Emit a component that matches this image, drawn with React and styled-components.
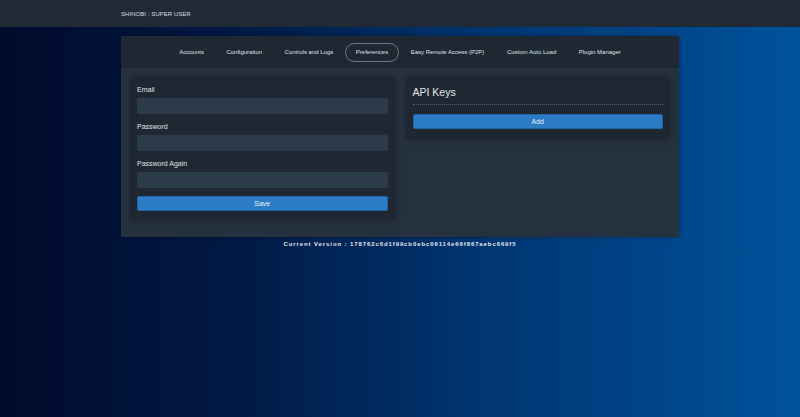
import React from 'react';
import styled, { createGlobalStyle } from 'styled-components';

const GlobalStyle = createGlobalStyle`
  html, body {
    margin: 0;
    padding: 0;
  }
  body {
    font-family: "Liberation Sans", Arial, sans-serif;
    background: #010a2b;
  }
  * {
    box-sizing: border-box;
  }
`;

const Page = styled.div`
  min-height: 100vh;
  background: linear-gradient(to right, #010a2b 0%, #011a45 30%, #003571 60%, #00529c 100%);
`;

const Header = styled.div`
  height: 27px;
  background: #202a35;
  display: flex;
  align-items: center;
`;

const HeaderInner = styled.div`
  width: 558px;
  margin: 0 auto;
  color: #d8dde3;
  font-size: 6px;
  letter-spacing: 0.05px;
`;

const Panel = styled.div`
  width: 558px;
  margin: 9px auto 0;
  background: #263140;
  border-radius: 2px;
  box-shadow: 0 0 4px rgba(0, 0, 0, 0.35);
  overflow: hidden;
`;

const Nav = styled.div`
  height: 32px;
  background: #1f2832;
  display: flex;
  justify-content: center;
  align-items: center;
`;

const NavItem = styled.div`
  height: 19px;
  padding: 0 10.25px;
  display: flex;
  align-items: center;
  border-radius: 10px;
  border: 1px solid ${(p) => (p.active ? '#6d7682' : 'transparent')};
  color: #dde2e8;
  font-size: 6px;
  white-space: nowrap;
`;

const Content = styled.div`
  display: grid;
  grid-template-columns: 1fr 1fr;
  gap: 11px;
  padding: 9px 9px 16px;
  align-items: start;
`;

const Card = styled.div`
  background: #1f2832;
  border-radius: 3px;
  padding: 8px 7px 10px;
  box-shadow: 0 0 6px rgba(0, 0, 0, 0.3);
`;

const Label = styled.div`
  color: #dfe3e8;
  font-size: 7px;
  line-height: 9px;
  margin-bottom: 4px;
`;

const Input = styled.div`
  height: 16px;
  background: #2c3b4a;
  border-radius: 2px;
  margin-bottom: 8px;
`;

const Button = styled.div`
  height: 15px;
  margin-top: ${(p) => p.gap || 0}px;
  background: #2b7bc5;
  border: 1px solid #1f66a8;
  border-radius: 2px;
  color: #e8f0f8;
  font-size: 7px;
  display: flex;
  align-items: center;
  justify-content: center;
`;

const Title = styled.div`
  color: #e4e7eb;
  font-size: 10.5px;
  line-height: 15px;
  padding-bottom: 4px;
  border-bottom: 1px dotted #56606c;
  margin-bottom: 9px;
`;

const Version = styled.div`
  text-align: center;
  color: #e2e7ee;
  font-size: 6px;
  font-weight: bold;
  letter-spacing: 0.9px;
  margin-top: 4px;
`;

const tabs = [
  'Accounts',
  'Configuration',
  'Controls and Logs',
  'Preferences',
  'Easy Remote Access (P2P)',
  'Custom Auto Load',
  'Plugin Manager',
];

const fields = ['Email', 'Password', 'Password Again'];

export default function App() {
  return (
    <Page>
      <GlobalStyle />
      <Header>
        <HeaderInner>SHINOBI : SUPER USER</HeaderInner>
      </Header>
      <Panel>
        <Nav>
          {tabs.map((t) => (
            <NavItem key={t} active={t === 'Preferences'}>
              {t}
            </NavItem>
          ))}
        </Nav>
        <Content>
          <Card>
            {fields.map((f) => (
              <div key={f}>
                <Label>{f}</Label>
                <Input />
              </div>
            ))}
            <Button gap={2}>Save</Button>
          </Card>
          <Card>
            <Title>API Keys</Title>
            <Button>Add</Button>
          </Card>
        </Content>
      </Panel>
      <Version>Current Version : 178762c6d1f99cb0ebc06114e66f867aebc669f5</Version>
    </Page>
  );
}
